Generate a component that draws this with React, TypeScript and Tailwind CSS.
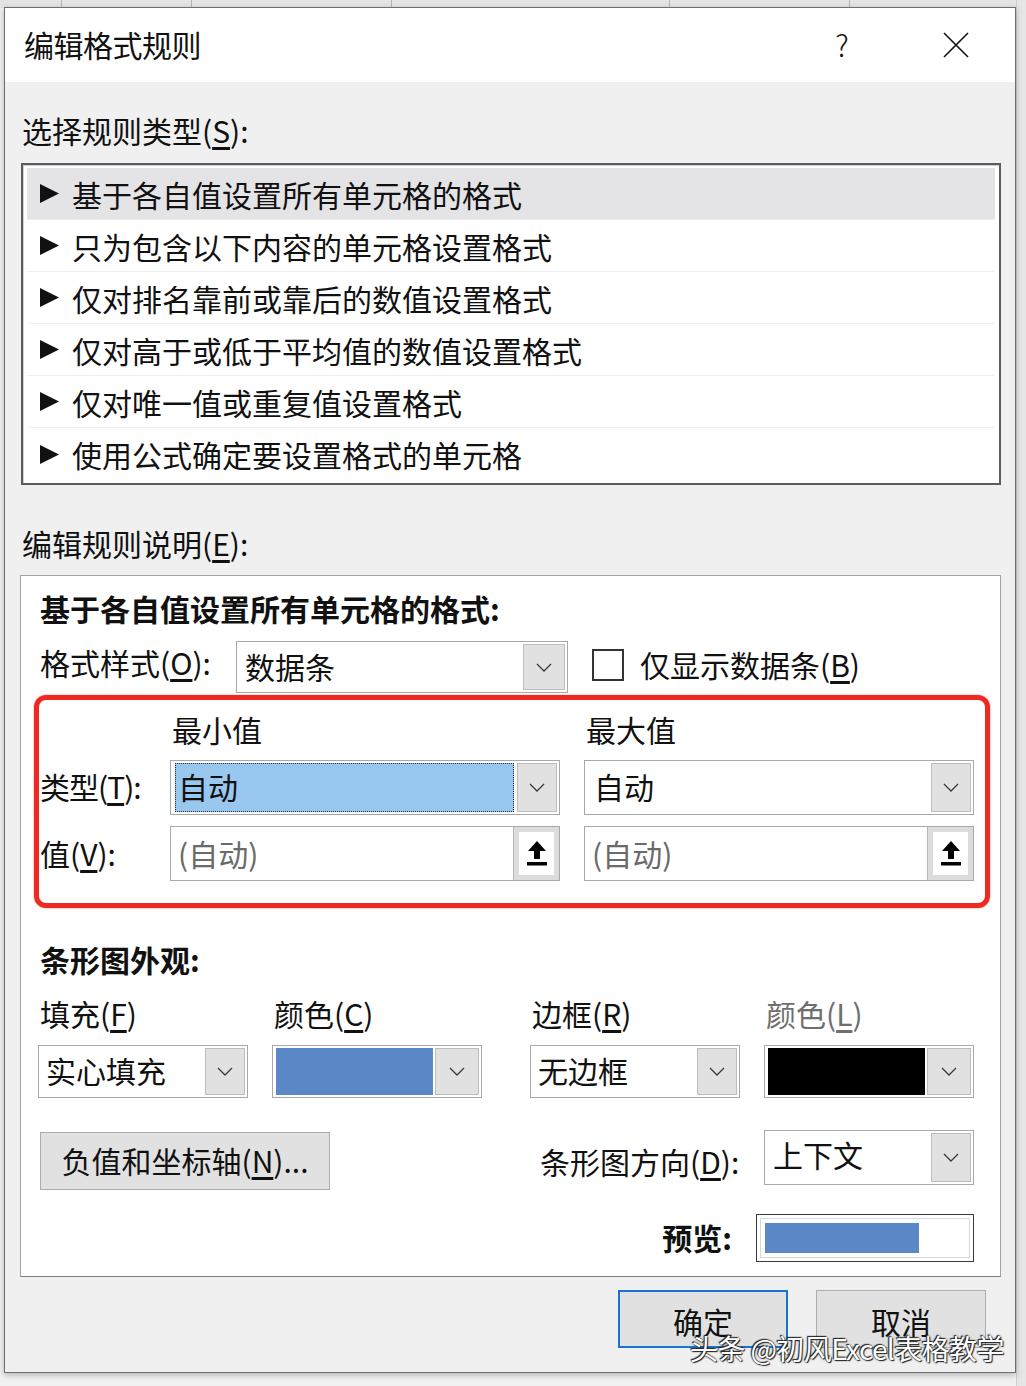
import React from "react";

const F = { fontFamily: '"Noto Sans CJK SC", "Noto Sans", sans-serif' };

function Chevron() {
  return (
    <svg width="16" height="9" viewBox="0 0 16 9">
      <path d="M1 1 L8 8 L15 1" stroke="#3a3a3a" strokeWidth="1.3" fill="none" />
    </svg>
  );
}

function Tri() {
  return (
    <svg width="19" height="19" viewBox="0 0 19 19">
      <polygon points="0,0 19,9.5 0,19" fill="#111" />
    </svg>
  );
}

function Upload() {
  return (
    <svg width="22" height="28" viewBox="0 0 22 28">
      <path d="M11 1 L20 11 L14 11 L14 19 L8 19 L8 11 L2 11 Z" fill="#000" />
      <rect x="1" y="22" width="20" height="3.5" fill="#000" />
    </svg>
  );
}

function DropBtn({ w = 40 }: { w?: number }) {
  return (
    <div
      className="flex items-center justify-center bg-[#e1e1e1] border border-[#bdbdbd]"
      style={{ width: w }}
    >
      <Chevron />
    </div>
  );
}

function Select({
  w,
  h,
  children,
  btn = 40,
}: {
  w: number;
  h: number;
  children?: React.ReactNode;
  btn?: number;
}) {
  return (
    <div
      className="flex items-stretch bg-white border border-[#a8a8a8] p-[2px]"
      style={{ width: w, height: h }}
    >
      <div className="flex-1 flex items-center min-w-0">{children}</div>
      <DropBtn w={btn} />
    </div>
  );
}

const rules = [
  "基于各自值设置所有单元格的格式",
  "只为包含以下内容的单元格设置格式",
  "仅对排名靠前或靠后的数值设置格式",
  "仅对高于或低于平均值的数值设置格式",
  "仅对唯一值或重复值设置格式",
  "使用公式确定要设置格式的单元格",
];

export default function App() {
  return (
    <div
      className="relative w-[1026px] h-[1386px] bg-[#f1f1f1] overflow-hidden text-[#111]"
      style={F}
    >
      {/* background excel strips */}
      <div className="absolute left-0 top-0 w-[1026px] h-[8px] bg-[#e4e4e4] flex">
        <div className="w-[62px] border-r border-[#b5b5b5]" />
        <div className="w-[130px] border-r border-[#b5b5b5]" />
        <div className="w-[200px] border-r border-[#b5b5b5]" />
        <div className="w-[278px] border-r border-[#b5b5b5]" />
        <div className="w-[180px] border-r border-[#b5b5b5]" />
      </div>
      <div className="absolute right-0 top-0 w-[10px] h-[1386px] bg-[#e6e6e6] border-l border-[#cfcfcf]" />

      <div className="relative mt-[7px] ml-[4px] w-[1012px] h-[1366px] border border-[#6e6e6e] bg-[#f0f0f1] flex flex-col shadow-[0_2px_6px_rgba(0,0,0,0.25)]">
        {/* title bar */}
        <div className="h-[74px] bg-white flex items-center pl-[19px] pr-[46px]">
          <div className="flex-1 text-[30px] leading-none tracking-[-0.5px] -mt-[3px]">编辑格式规则</div>
          <div className="w-[20px] text-[30px] leading-none text-center font-light -mt-[3px]">?</div>
          <div className="ml-[91px] w-[26px] h-[26px]">
            <svg width="26" height="26" viewBox="0 0 26 26">
              <path d="M1 1 L25 25 M25 1 L1 25" stroke="#111" strokeWidth="1.6" />
            </svg>
          </div>
        </div>

        {/* body */}
        <div className="flex flex-col pl-[16px]">
          <div className="pt-[28px] ml-[1px] h-[70px] text-[30px] leading-[40px]">
            选择规则类型(<u className="underline-offset-4">S</u>):
          </div>

          <div className="mt-[11px] w-[980px] h-[322px] border-2 border-[#5d5d5d] bg-white px-[4px] py-[3px] shadow-[inset_1px_1px_0_#d0d0d0]">
            {rules.map((r, i) => (
              <div
                key={r}
                className={
                  "h-[52px] flex items-center pl-[13px] " +
                  (i === 0 ? "bg-[#e4e4e6] " : "") +
                  (i < rules.length - 1 ? "border-b border-[#eeeeee]" : "")
                }
              >
                <Tri />
                <span className="ml-[13px] text-[30px] leading-none">{r}</span>
              </div>
            ))}
          </div>

          <div className="mt-[38px] ml-[1px] h-[42px] text-[30px] leading-[40px]">
            编辑规则说明(<u className="underline-offset-4">E</u>):
          </div>

          {/* panel */}
          <div className="mt-[10px] ml-[-1px] w-[981px] h-[702px] bg-white border border-[#a2a2a2] border-b-[#7f7f7f] flex flex-col">
            <div className="mt-[12px] ml-[19px] h-[42px] text-[30px] leading-[40px] font-bold">
              基于各自值设置所有单元格的格式:
            </div>

            <div className="mt-[11px] h-[52px] flex items-center">
              <div className="ml-[19px] w-[196px] text-[30px] leading-none -mt-[10px]">
                格式样式(<u className="underline-offset-4">O</u>):
              </div>
              <Select w={332} h={52} btn={42}>
                <span className="pl-[6px] text-[30px] leading-none -mt-[3px]">数据条</span>
              </Select>
              <div className="ml-[24px] w-[32px] h-[32px] border-2 border-[#333] bg-white -mt-[4px]" />
              <div className="ml-[16px] text-[30px] leading-none -mt-[6px]">
                仅显示数据条(<u className="underline-offset-4">B</u>)
              </div>
            </div>

            {/* type/value section */}
            <div className="relative mt-[2px] h-[213px] pt-[16px] flex">
              <div className="ml-[19px] w-[130px] flex flex-col">
                <div className="h-[40px]" />
                <div className="mt-[9px] h-[55px] flex items-center text-[30px] leading-none tracking-[-1px] pb-[3px]">
                  类型(<u className="underline-offset-4">T</u>):
                </div>
                <div className="mt-[11px] h-[55px] flex items-center text-[30px] leading-none pb-[2px]">
                  值(<u className="underline-offset-4">V</u>):
                </div>
              </div>

              <div className="w-[390px] flex flex-col">
                <div className="h-[40px] pl-[2px] text-[30px] leading-[36px]">最小值</div>
                <div className="mt-[9px]">
                  <Select w={390} h={55} btn={40}>
                    <div className="ml-[2px] mr-[3px] h-full flex-1 bg-[#99c8ef] border border-dotted border-[#1f2a44] flex items-center">
                      <span className="pl-[2px] text-[30px] leading-none -mt-[3px]">自动</span>
                    </div>
                  </Select>
                </div>
                <div className="mt-[11px] w-[390px] h-[55px] bg-white border border-[#a8a8a8] flex items-stretch">
                  <div className="flex-1 flex items-center pl-[7px] text-[30px] leading-none text-[#6a6a6a] pb-[2px]">
                    (自动)
                  </div>
                  <div className="w-[46px] bg-[#dcdcdc] border-l border-[#b8b8b8] p-[5px] flex">
                    <div className="flex-1 bg-white flex items-center justify-center">
                      <Upload />
                    </div>
                  </div>
                </div>
              </div>

              <div className="ml-[24px] w-[390px] flex flex-col">
                <div className="h-[40px] pl-[2px] text-[30px] leading-[36px]">最大值</div>
                <div className="mt-[9px]">
                  <Select w={390} h={55} btn={40}>
                    <span className="pl-[7px] text-[30px] leading-none -mt-[3px]">自动</span>
                  </Select>
                </div>
                <div className="mt-[11px] w-[390px] h-[55px] bg-white border border-[#a8a8a8] flex items-stretch">
                  <div className="flex-1 flex items-center pl-[7px] text-[30px] leading-none text-[#6a6a6a] pb-[2px]">
                    (自动)
                  </div>
                  <div className="w-[46px] bg-[#dcdcdc] border-l border-[#b8b8b8] p-[5px] flex">
                    <div className="flex-1 bg-white flex items-center justify-center">
                      <Upload />
                    </div>
                  </div>
                </div>
              </div>

              <div className="pointer-events-none absolute left-[13px] top-0 w-[956px] h-[213px] border-[5px] border-[#ec2a22] rounded-[12px] shadow-[0_0_2px_rgba(236,42,34,0.6)]" />
            </div>

            <div className="mt-[33px] ml-[19px] h-[40px] text-[30px] leading-[36px] font-bold">
              条形图外观:
            </div>

            <div className="mt-[14px] ml-[17px] h-[40px] flex text-[30px] leading-[36px]">
              <div className="w-[210px] pl-[2px]">
                填充(<u className="underline-offset-4">F</u>)
              </div>
              <div className="ml-[24px] w-[210px] pl-[2px]">
                颜色(<u className="underline-offset-4">C</u>)
              </div>
              <div className="ml-[48px] w-[210px] pl-[2px]">
                边框(<u className="underline-offset-4">R</u>)
              </div>
              <div className="ml-[24px] w-[210px] pl-[2px] text-[#6f6f6f]">
                颜色(<u className="underline-offset-4">L</u>)
              </div>
            </div>

            <div className="mt-[10px] ml-[17px] flex">
              <Select w={210} h={53} btn={40}>
                <span className="pl-[5px] text-[30px] leading-none -mt-[3px]">实心填充</span>
              </Select>
              <div className="ml-[24px]">
                <Select w={210} h={53} btn={44}>
                  <div className="ml-[1px] mr-[2px] h-full flex-1 bg-[#5b88c7]" />
                </Select>
              </div>
              <div className="ml-[48px]">
                <Select w={210} h={53} btn={40}>
                  <span className="pl-[5px] text-[30px] leading-none -mt-[3px]">无边框</span>
                </Select>
              </div>
              <div className="ml-[24px]">
                <Select w={210} h={53} btn={44}>
                  <div className="ml-[1px] mr-[2px] h-full flex-1 bg-black" />
                </Select>
              </div>
            </div>

            <div className="mt-[32px] h-[60px] flex items-start">
              <div className="mt-[2px] ml-[19px] w-[290px] h-[58px] bg-[#e1e1e1] border border-[#adadad] flex items-center justify-center text-[30px] leading-none pb-[3px]">
                负值和坐标轴(<u className="underline-offset-4">N</u>)...
              </div>
              <div className="ml-[210px] w-[224px] h-[64px] flex items-center text-[30px] leading-none pb-[3px]">
                条形图方向(<u className="underline-offset-4">D</u>):
              </div>
              <Select w={210} h={55} btn={40}>
                <span className="pl-[6px] pb-[8px] text-[30px] leading-none">上下文</span>
              </Select>
            </div>

            <div className="mt-[24px] h-[48px] flex items-center justify-end pr-[26px]">
              <div className="text-[30px] leading-none font-bold pb-[2px]">预览:</div>
              <div className="ml-[24px] w-[218px] h-[48px] border border-[#3a3a3a] p-[3px] bg-white">
                <div className="w-full h-full border border-[#d8d8d8] p-[4px]">
                  <div className="w-[154px] h-full bg-[#5b88c7]" />
                </div>
              </div>
            </div>
          </div>
        </div>

        {/* buttons */}
        <div className="mt-[13px] flex justify-end pr-[29px]">
          <div className="w-[170px] h-[58px] bg-[#e1e1e1] border-2 border-[#1a72d2] flex items-center justify-center text-[30px] leading-none pt-[4px]">
            确定
          </div>
          <div className="ml-[28px] w-[170px] h-[58px] bg-[#e1e1e1] border border-[#adadad] flex items-center justify-center text-[30px] leading-none pt-[4px]">
            取消
          </div>
        </div>
      </div>

      {/* watermark */}
      <div className="absolute left-[690px] top-[1331px] text-[28px] leading-[34px] text-white tracking-[-0.6px] [text-shadow:0_0_2px_#222,1px_1px_1px_#222,-1px_-1px_1px_#222]">
        头条 @初风Excel表格教学
      </div>
    </div>
  );
}
